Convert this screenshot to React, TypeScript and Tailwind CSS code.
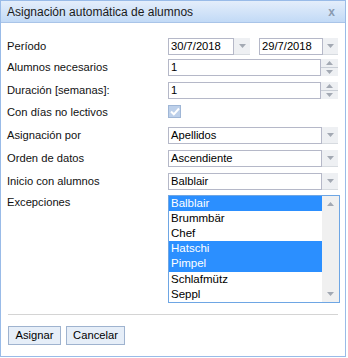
import React from "react";

const Down = () => (
  <svg width="7" height="4" viewBox="0 0 7 4"><path d="M0 0h7L3.5 4z" fill="#a3a9b3" /></svg>
);
const Up = () => (
  <svg width="7" height="4" viewBox="0 0 7 4"><path d="M0 4h7L3.5 0z" fill="#a3a9b3" /></svg>
);

const TriggerBtn = ({ w = "w-[16px]" }: { w?: string }) => (
  <div className={`${w} h-full flex items-center justify-center bg-[#eef0f3] border-b border-[#d7dbe0]`}>
    <Down />
  </div>
);

const Spinner = () => (
  <div className="w-[17px] h-full flex flex-col bg-[#eef0f3]">
    <div className="flex-1 flex items-center justify-center border-b border-[#c9ced6]"><Up /></div>
    <div className="flex-1 flex items-center justify-center"><Down /></div>
  </div>
);

const Label = ({ children }: { children: React.ReactNode }) => (
  <div className="w-[161px] text-[11.2px] text-[#111]">{children}</div>
);

const TextBox = ({ w, children }: { w: string; children?: React.ReactNode }) => (
  <div className={`${w} h-full border border-[#b5b8c8] bg-white px-[2px] flex items-center text-[11.2px] text-black leading-none`}>{children}</div>
);

export default function App() {
  const items = [
    { t: "Balblair", s: true },
    { t: "Brummbär", s: false },
    { t: "Chef", s: false },
    { t: "Hatschi", s: true },
    { t: "Pimpel", s: true },
    { t: "Schlafmütz", s: false },
    { t: "Seppl", s: false },
  ];
  return (
    <div className="w-[348px] h-[358px] bg-white" style={{ fontFamily: '"Liberation Sans", Arial, sans-serif' }}>
      <div className="w-[346px] h-[357px] border border-[#99bbe8] flex flex-col bg-white">
        <div className="h-[22px] shrink-0 flex items-center justify-between pl-[6px] pr-[10px] bg-gradient-to-b from-[#e4eefb] to-[#c2daf6] border-b border-[#a9c4e8]">
          <span className="text-[12px] text-[#1a1a1a]">Asignación automática de alumnos</span>
          <span className="text-[12px] font-bold text-[#8a9ab0] leading-none">x</span>
        </div>
        <div className="flex flex-col pl-[6px] pt-[15px]">
          <div className="h-[21px] flex items-start">
            <Label><div className="h-[17px] flex items-center">Período</div></Label>
            <div className="h-[17px] flex">
              <TextBox w="w-[66px]">30/7/2018</TextBox>
              <TriggerBtn />
              <div className="w-[9px]" />
              <TextBox w="w-[64px]">29/7/2018</TextBox>
              <TriggerBtn w="w-[15px]" />
            </div>
          </div>
          <div className="h-[23px] flex items-start">
            <Label><div className="h-[17px] flex items-center">Alumnos necesarios</div></Label>
            <div className="h-[17px] flex">
              <TextBox w="w-[153px]">1</TextBox>
              <Spinner />
            </div>
          </div>
          <div className="h-[23px] flex items-start">
            <Label><div className="h-[17px] flex items-center">Duración [semanas]:</div></Label>
            <div className="h-[17px] flex">
              <TextBox w="w-[153px]">1</TextBox>
              <Spinner />
            </div>
          </div>
          <div className="h-[22px] flex items-start">
            <Label><div className="h-[14px] flex items-center">Con días no lectivos</div></Label>
            <div className="w-[13px] h-[13px] border border-[#9fb6d6] bg-[#bdd0ea] flex items-center justify-center">
              <svg width="10" height="9" viewBox="0 0 10 9"><path d="M1 4.5l2.8 2.8L9 1.5" stroke="white" strokeWidth="2" fill="none" /></svg>
            </div>
          </div>
          {[
            ["Asignación por", "Apellidos"],
            ["Orden de datos", "Ascendiente"],
            ["Inicio con alumnos", "Balblair"],
          ].map(([l, v], i) => (
            <div key={l} className={`${i === 2 ? "h-[22px]" : "h-[23px]"} flex items-start`}>
              <Label><div className="h-[17px] flex items-center">{l}</div></Label>
              <div className="h-[17px] flex">
                <TextBox w="w-[154px]">{v}</TextBox>
                <TriggerBtn w="w-[16px]" />
              </div>
            </div>
          ))}
          <div className="flex items-start">
            <Label><div className="h-[14px] flex items-center">Excepciones</div></Label>
            <div className="w-[172px] h-[108px] border border-[#6ea6e4] flex bg-white">
              <div className="flex-1 flex flex-col">
                {items.map((it) => (
                  <div key={it.t} className={`h-[15.2px] flex items-center pl-[2px] text-[11.5px] leading-none ${it.s ? "bg-[#2b8fff] text-white" : "text-black"}`}>{it.t}</div>
                ))}
              </div>
              <div className="w-[17px] bg-[#f0f0f0] flex flex-col justify-between items-center py-[6px]">
                <Up />
                <Down />
              </div>
            </div>
          </div>
        </div>
        <div className="mx-[7px] mt-[11px] border-t border-[#d4d4d4]" />
        <div className="flex gap-[5px] pl-[7px] pt-[11px]">
          <button className="h-[19px] w-[53px] border border-[#9fb3cf] bg-[#e6eef8] text-[11.2px] text-black leading-none">Asignar</button>
          <button className="h-[19px] w-[59px] border border-[#9fb3cf] bg-[#e6eef8] text-[11.2px] text-black leading-none">Cancelar</button>
        </div>
      </div>
    </div>
  );
}
